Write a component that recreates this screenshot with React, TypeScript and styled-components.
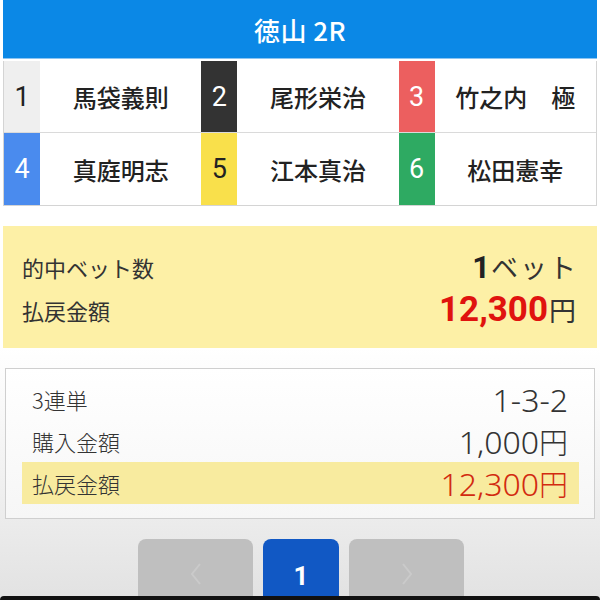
import React from "react";
import styled, { createGlobalStyle } from "styled-components";

const Global = createGlobalStyle`
  html, body { margin: 0; padding: 0; height: 600px; overflow: hidden; }
  body {
    font-family: "Noto Sans CJK JP", "Noto Sans", sans-serif;
    background: linear-gradient(180deg, #ffffff 0%, #ffffff 58%, #f4f4f4 75%, #e2e2e2 100%);
    color: #333;
  }
`;

const Page = styled.div`
  width: 600px;
  height: 600px;
  box-sizing: border-box;
  padding: 0 3px;
  display: flex;
  flex-direction: column;
  & > * { flex-shrink: 0; }
`;

const Header = styled.div`
  height: 58px;
  background: #0b88e6;
  color: #fff;
  font-size: 26px;
  font-weight: 500;
  display: flex;
  align-items: center;
  justify-content: center;
  letter-spacing: 0.5px;
  border-bottom: 1px solid #8cc5f2;
`;

const Grid = styled.div`
  margin-top: 2px;
  display: grid;
  grid-template-columns: 36px 1fr 36px 1fr 36px 1fr;
  grid-auto-rows: 72px;
  border: 1px solid #d4d4d4;
  border-top: none;
  background: #fff;
`;

const Num = styled.div<{ $bg: string; $fg: string; $last?: boolean }>`
  background: ${(p) => p.$bg};
  color: ${(p) => p.$fg};
  font-family: "Roboto", "Liberation Sans", sans-serif;
  font-size: 27px;
  display: flex;
  align-items: center;
  justify-content: center;
  border-bottom: ${(p) => (p.$last ? "none" : "1px solid #dadada")};
`;

const Name = styled.div<{ $last?: boolean }>`
  font-size: 24px;
  font-weight: 500;
  color: #222;
  display: flex;
  align-items: center;
  justify-content: center;
  white-space: pre;
  border-bottom: ${(p) => (p.$last ? "none" : "1px solid #dadada")};
`;

const Summary = styled.div`
  margin-top: 20px;
  height: 122px;
  box-sizing: border-box;
  background: #fdf0a6;
  padding: 19px 19px 0 19px;
  display: flex;
  flex-direction: column;
`;

const SumRow = styled.div`
  height: 43px;
  display: flex;
  align-items: center;
  justify-content: space-between;
`;

const SumLabel = styled.span`
  font-size: 22px;
  color: #333;
`;

const SumValue = styled.span`
  display: flex;
  align-items: baseline;
  font-size: 27px;
  color: #333;
  letter-spacing: 2px;
`;

const BigNum = styled.span<{ $red?: boolean }>`
  font-family: "Roboto", "Liberation Sans", sans-serif;
  font-weight: 700;
  font-size: ${(p) => (p.$red ? "35px" : "31px")};
  color: ${(p) => (p.$red ? "#e0130e" : "#222")};
  letter-spacing: 0;
  margin-right: 1px;
`;

const Detail = styled.div`
  margin: 20px 2px 0;
  border: 1px solid #cfcfcf;
  background: linear-gradient(180deg, #ffffff 0%, #f6f6f6 100%);
  padding: 9px 15px 14px 16px;
  display: flex;
  flex-direction: column;
`;

const DetailRow = styled.div<{ $hl?: boolean }>`
  height: 42px;
  box-sizing: border-box;
  display: flex;
  align-items: center;
  justify-content: space-between;
  padding: 0 11px 0 10px;
  background: ${(p) => (p.$hl ? "#f8eb9f" : "transparent")};
`;

const DLabel = styled.span`
  font-size: 22px;
  font-weight: 300;
  color: #333;
`;

const DValue = styled.span<{ $red?: boolean }>`
  font-size: 32px;
  font-weight: 300;
  color: ${(p) => (p.$red ? "#d22a10" : "#333")};
  font-family: "Noto Sans", "Noto Sans CJK JP", sans-serif;
  display: flex;
  align-items: baseline;
`;

const Yen = styled.span`
  font-family: "Noto Sans CJK JP", sans-serif;
  font-size: 29px;
  font-weight: 300;
`;

const Pager = styled.div`
  margin-top: 20px;
  display: flex;
  justify-content: center;
  gap: 10px;
  padding-left: 2px;
`;

const PageBtn = styled.div<{ $active?: boolean; $w: number }>`
  width: ${(p) => p.$w}px;
  height: 70px;
  border-radius: 8px 8px 0 0;
  background: ${(p) => (p.$active ? "#1158c4" : "#bfbfbf")};
  color: ${(p) => (p.$active ? "#fff" : "#cbcbcb")};
  display: flex;
  align-items: flex-start;
  justify-content: center;
  padding-top: 22px;
  box-sizing: border-box;
  font-family: "Roboto", "Liberation Sans", sans-serif;
  font-size: 26px;
  font-weight: 700;
`;

const HomeBar = styled.div`
  position: fixed;
  left: 0;
  right: 0;
  bottom: 0;
  height: 4px;
  background: #111;
  border-radius: 10px 10px 0 0;
`;

const racers = [
  { n: "1", name: "馬袋義則", bg: "#efefef", fg: "#222" },
  { n: "2", name: "尾形栄治", bg: "#333333", fg: "#fff" },
  { n: "3", name: "竹之内　極", bg: "#ec5f5f", fg: "#fff" },
  { n: "4", name: "真庭明志", bg: "#4a8bee", fg: "#fff" },
  { n: "5", name: "江本真治", bg: "#f9e04b", fg: "#222" },
  { n: "6", name: "松田憲幸", bg: "#2eaa62", fg: "#fff" },
];

const Chevron = ({ dir }: { dir: "l" | "r" }) => (
  <svg width="14" height="26" viewBox="0 0 14 26">
    <path
      d={dir === "l" ? "M11 3 L3 13 L11 23" : "M3 3 L11 13 L3 23"}
      stroke="#cacaca"
      strokeWidth="2"
      fill="none"
    />
  </svg>
);

export default function App() {
  return (
    <>
      <Global />
      <Page>
        <Header>徳山 2R</Header>
        <Grid>
          {racers.map((r, i) => (
            <React.Fragment key={r.n}>
              <Num $bg={r.bg} $fg={r.fg} $last={i >= 3}>
                {r.n}
              </Num>
              <Name $last={i >= 3}>{r.name}</Name>
            </React.Fragment>
          ))}
        </Grid>
        <Summary>
          <SumRow>
            <SumLabel>的中ベット数</SumLabel>
            <SumValue>
              <BigNum>1</BigNum>ベット
            </SumValue>
          </SumRow>
          <SumRow>
            <SumLabel>払戻金額</SumLabel>
            <SumValue>
              <BigNum $red>12,300</BigNum>円
            </SumValue>
          </SumRow>
        </Summary>
        <Detail>
          <DetailRow>
            <DLabel>3連単</DLabel>
            <DValue>1-3-2</DValue>
          </DetailRow>
          <DetailRow>
            <DLabel>購入金額</DLabel>
            <DValue>
              1,000<Yen>円</Yen>
            </DValue>
          </DetailRow>
          <DetailRow $hl>
            <DLabel>払戻金額</DLabel>
            <DValue $red>
              12,300<Yen>円</Yen>
            </DValue>
          </DetailRow>
        </Detail>
        <Pager>
          <PageBtn $w={115}>
            <Chevron dir="l" />
          </PageBtn>
          <PageBtn $w={76} $active>
            1
          </PageBtn>
          <PageBtn $w={115}>
            <Chevron dir="r" />
          </PageBtn>
        </Pager>
      </Page>
      <HomeBar />
    </>
  );
}
